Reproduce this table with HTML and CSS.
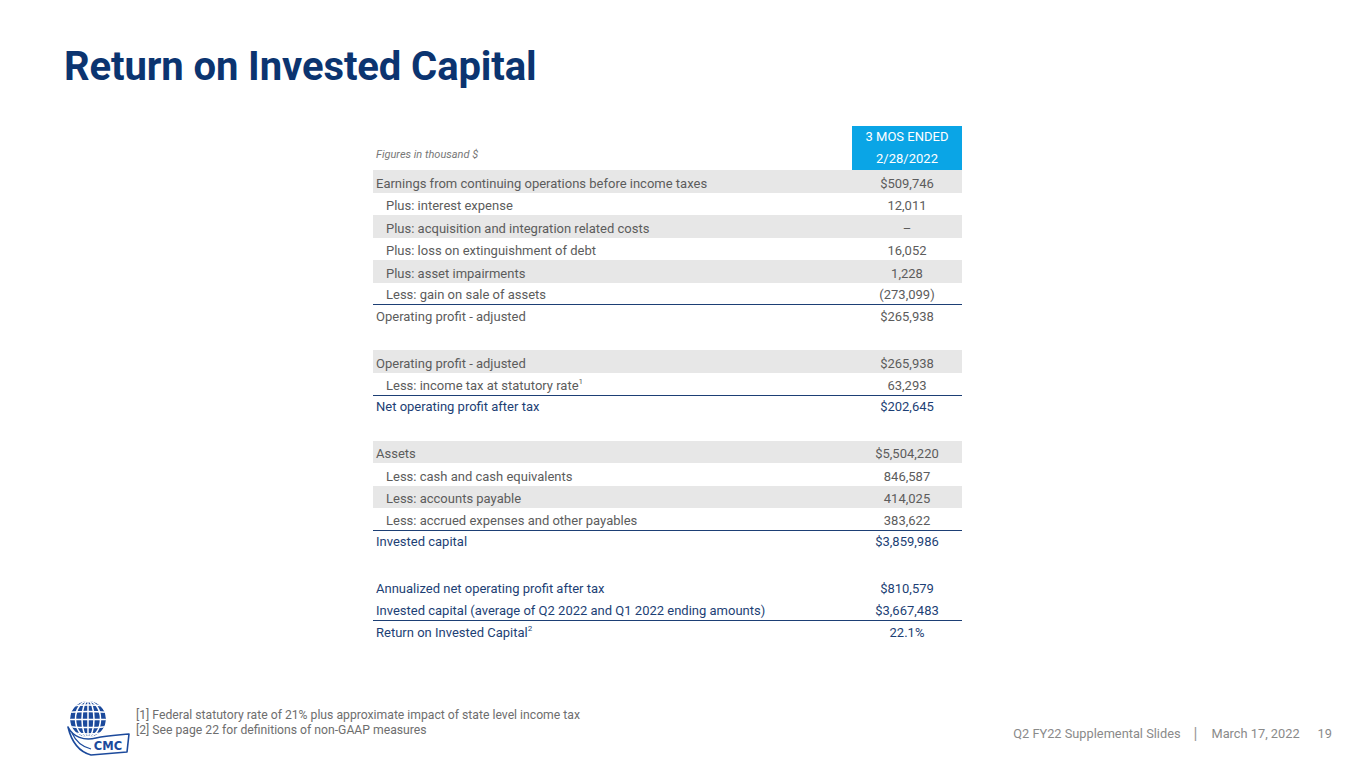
FILE: index.html
```html
<!DOCTYPE html>
<html>
<head>
<meta charset="utf-8">
<link rel="stylesheet" href="styles.css">
</head>
<body>
<div class="slide">
  <h1 class="title">Return on Invested Capital</h1>
  <div class="table-wrap">
    <table class="roic">
      <thead>
        <tr>
          <th class="note">Figures in thousand $</th>
          <th class="period">3 MOS ENDED<br>2/28/2022</th>
        </tr>
      </thead>
      <tbody>
        <tr class="shade"><td>Earnings from continuing operations before income taxes</td><td class="v">$509,746</td></tr>
        <tr><td class="in">Plus: interest expense</td><td class="v">12,011</td></tr>
        <tr class="shade"><td class="in">Plus: acquisition and integration related costs</td><td class="v">–</td></tr>
        <tr><td class="in">Plus: loss on extinguishment of debt</td><td class="v">16,052</td></tr>
        <tr class="shade"><td class="in">Plus: asset impairments</td><td class="v">1,228</td></tr>
        <tr class="rule"><td class="in">Less: gain on sale of assets</td><td class="v">(273,099)</td></tr>
        <tr class="after"><td>Operating profit - adjusted</td><td class="v">$265,938</td></tr>
        <tr class="gap"><td></td><td></td></tr>
        <tr class="shade"><td>Operating profit - adjusted</td><td class="v">$265,938</td></tr>
        <tr class="rule"><td class="in">Less: income tax at statutory rate<sup>1</sup></td><td class="v">63,293</td></tr>
        <tr class="blue after"><td>Net operating profit after tax</td><td class="v">$202,645</td></tr>
        <tr class="gap"><td></td><td></td></tr>
        <tr class="shade"><td>Assets</td><td class="v">$5,504,220</td></tr>
        <tr><td class="in">Less: cash and cash equivalents</td><td class="v">846,587</td></tr>
        <tr class="shade"><td class="in">Less: accounts payable</td><td class="v">414,025</td></tr>
        <tr class="rule"><td class="in">Less: accrued expenses and other payables</td><td class="v">383,622</td></tr>
        <tr class="blue after"><td>Invested capital</td><td class="v">$3,859,986</td></tr>
        <tr class="gap"><td></td><td></td></tr>
        <tr class="blue"><td>Annualized net operating profit after tax</td><td class="v">$810,579</td></tr>
        <tr class="blue rule"><td>Invested capital (average of Q2 2022 and Q1 2022 ending amounts)</td><td class="v">$3,667,483</td></tr>
        <tr class="blue after last"><td>Return on Invested Capital<sup>2</sup></td><td class="v">22.1%</td></tr>
      </tbody>
    </table>
  </div>
  <div class="footer">
    <div class="footer-left">
      <svg class="logo" width="68" height="58" viewBox="0 0 68 58">
        <defs>
          <clipPath id="globe"><circle cx="24" cy="19" r="18"/></clipPath>
        </defs>
        <g clip-path="url(#globe)">
          <circle cx="24" cy="19" r="18" fill="#1c4a9c"/>
          <g stroke="#fff" stroke-width="1.5" fill="none">
            <path d="M0 7 Q24 3 48 7"/>
            <path d="M0 13 Q24 10 48 13"/>
            <path d="M0 19.5 L48 19.5"/>
            <path d="M0 26 Q24 29 48 26"/>
            <path d="M0 32 Q24 36 48 32"/>
            <line x1="24" y1="0" x2="24" y2="40"/>
            <ellipse cx="24" cy="19" rx="6" ry="18"/>
            <ellipse cx="24" cy="19" rx="12.5" ry="18"/>
          </g>
        </g>
        <path d="M4 27 C9 37 20 41 32 38 C44 35 56 35 65 34 L63 52 L27 55 C16 52 8 44 4 27 Z" fill="#fff" stroke="#1c4a9c" stroke-width="1.6" stroke-linejoin="round"/>
        <path d="M8 33 C12 42 19 47 27 49" fill="none" stroke="#1c4a9c" stroke-width="1.2"/>
        <text x="44" y="50" text-anchor="middle" class="logo-text">CMC</text>
      </svg>
      <div class="notes">
        <div>[1] Federal statutory rate of 21% plus approximate impact of state level income tax</div>
        <div>[2] See page 22 for definitions of non-GAAP measures</div>
      </div>
    </div>
    <div class="footer-right">
      <span>Q2 FY22 Supplemental Slides</span>
      <span class="bar">|</span>
      <span>March 17, 2022</span>
      <span class="page">19</span>
    </div>
  </div>
</div>
</body>
</html>
```
FILE: styles.css
```css
html, body {
  margin: 0;
  padding: 0;
  background: #fff;
}
.slide {
  width: 1365px;
  height: 768px;
  position: relative;
  font-family: Roboto, "Liberation Sans", Arial, sans-serif;
  color: #5c5c5c;
  box-sizing: border-box;
  padding: 43px 0 0 64px;
  display: flex;
  flex-direction: column;
}
.title {
  margin: 0;
  font-size: 40px;
  font-weight: 700;
  color: #0b3470;
  line-height: 48px;
  letter-spacing: -0.1px;
}
.table-wrap {
  margin-top: 35px;
  padding-left: 309px;
}
.roic {
  border-collapse: collapse;
  width: 589px;
  font-size: 13px;
}
.roic th {
  padding: 0;
  font-weight: 400;
}
.roic td {
  padding: 0;
  height: 22.5px;
  line-height: 18px;
  vertical-align: bottom;
  font-weight: 400;
}
.roic td:first-child {
  padding-left: 3px;
  text-align: left;
}
.roic td.in {
  padding-left: 13px;
}
.roic .v {
  width: 110px;
  text-align: center;
}
.note {
  text-align: left;
  vertical-align: bottom;
  font-style: italic;
  font-size: 11px;
  line-height: 22px;
  color: #777;
  padding-left: 3px !important;
  padding-bottom: 4px !important;
}
.period {
  background: #0aa5e6;
  color: #fff;
  width: 110px;
  height: 44px;
  line-height: 22px;
  font-size: 13px;
  text-align: center;
}
.shade td {
  background: #e7e7e7;
}
.rule td {
  height: 21.8px;
  border-bottom: 1px solid #1d3f75;
}
.after td {
  line-height: 22px;
}
.last td {
  line-height: 24px;
}
.blue td {
  color: #1d3f75;
}
sup {
  font-size: 8px;
  line-height: 0;
  vertical-align: 6px;
}
.footer {
  margin-top: auto;
  height: 68px;
  display: flex;
  justify-content: space-between;
  align-items: flex-start;
  padding-right: 33px;
}
.footer-left {
  display: flex;
  align-items: flex-start;
}
.logo {
  display: block;
}
.logo-text {
  font-family: "DejaVu Sans", sans-serif;
  font-weight: 700;
  font-size: 11.5px;
  fill: #1c4a9c;
}
.notes {
  margin-left: 4px;
  padding-top: 8px;
  font-size: 12.2px;
  line-height: 15px;
  color: #6e6e6e;
}
.footer-right {
  padding-top: 26px;
  font-size: 12.8px;
  color: #8a8a8a;
  display: flex;
}
.bar {
  margin: 0 14px 0 13px;
  font-size: 16px;
  line-height: 15px;
  color: #9a9a9a;
}
.page {
  margin-left: 18px;
}
```
